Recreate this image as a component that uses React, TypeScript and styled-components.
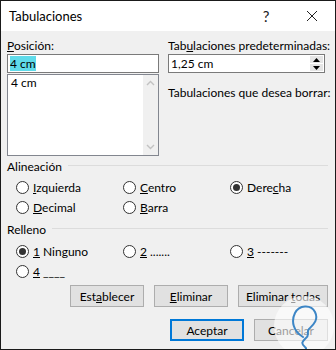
import styled, { createGlobalStyle } from 'styled-components';

const GlobalStyle = createGlobalStyle`
    html, body {
        margin: 0;
        padding: 0;
        background: #ffffff;
    }
    body {
        font-family: Lato, "Noto Sans", sans-serif;
        font-size: 12px;
        color: #000;
    }
`

const Dialog = styled.div`
    position: relative;
    width: 336px;
    height: 350px;
    box-sizing: border-box;
    border: 1px solid #1a1a1a;
    background: #f0f0f0;
    display: flex;
    flex-direction: column;
    overflow: hidden;
`

const TitleBar = styled.div`
    height: 30px;
    background: #fff;
    display: flex;
    align-items: center;
    padding-left: 8px;
    flex-shrink: 0;

    h1 {
        flex: 1;
        margin: 0;
        font-size: 13px;
        font-weight: normal;
    }
`

const TitleButton = styled.span`
    width: 46px;
    text-align: center;
    font-size: 15px;
    color: #222;
`

const Body = styled.div`
    padding: 0 7px 0 6px;
    display: flex;
    flex-direction: column;
`

const TopGrid = styled.div`
    display: grid;
    grid-template-columns: 152px 157px;
    column-gap: 9px;
    padding-top: 6px;
`

const Column = styled.div`
    display: flex;
    flex-direction: column;
`

const Label = styled.div<{ $top?: number }>`
    height: 17px;
    line-height: 17px;
    margin-top: ${p => p.$top ?? 0}px;
    white-space: nowrap;
`

const TextBox = styled.div`
    height: 19px;
    box-sizing: border-box;
    border: 1px solid #7a7a7a;
    background: #fff;
    display: flex;
    align-items: center;
    padding-left: 2px;
`

const Selected = styled.span`
    background: #5fdbea;
    line-height: 15px;
`

const ListBox = styled.div`
    height: 82px;
    box-sizing: border-box;
    border: 1px solid #82868f;
    background: #fff;
    display: flex;
    margin-top: 1px;
`

const ListItems = styled.div`
    flex: 1;
    padding: 0 3px;
    line-height: 16px;
`

const ScrollTrack = styled.div`
    width: 15px;
    background: #f0f0f0;
    display: flex;
    flex-direction: column;
    justify-content: space-between;
    align-items: center;
    padding: 5px 0;
`

const SpinBox = styled(TextBox)`
    padding-right: 1px;
    justify-content: space-between;
`

const SpinButtons = styled.div`
    width: 13px;
    height: 15px;
    display: flex;
    flex-direction: column;
    gap: 1px;
`

const SpinButton = styled.div`
    flex: 1;
    background: #e5e5e5;
    display: flex;
    align-items: center;
    justify-content: center;
`

const GroupHeader = styled.div<{ $top: number }>`
    display: flex;
    align-items: center;
    gap: 6px;
    margin-top: ${p => p.$top}px;
    height: 17px;
    line-height: 17px;

    &::after {
        content: "";
        flex: 1;
        height: 1px;
        margin-top: -2px;
        background: #dcdcdc;
    }
`

const RadioGrid = styled.div<{ $top: number }>`
    display: grid;
    grid-template-columns: 107px 107px 1fr;
    grid-auto-rows: 20px;
    padding-left: 9px;
    margin-top: ${p => p.$top}px;
`

const RadioItem = styled.div`
    display: flex;
    align-items: center;
    gap: 4px;
    white-space: nowrap;
`

const RadioCircle = styled.span<{ $checked?: boolean }>`
    width: 13px;
    height: 13px;
    box-sizing: border-box;
    border: 1px solid #333;
    border-radius: 50%;
    background: #fff;
    display: flex;
    align-items: center;
    justify-content: center;

    &::after {
        content: "";
        width: 7px;
        height: 7px;
        border-radius: 50%;
        background: ${p => (p.$checked ? '#333' : 'transparent')};
    }
`

const ButtonRow = styled.div<{ $top: number }>`
    display: flex;
    justify-content: flex-end;
    gap: 10px;
    margin-top: ${p => p.$top}px;
`

const Button = styled.button<{ $width?: number; $default?: boolean }>`
    width: ${p => p.$width ?? 74}px;
    height: 22px;
    box-sizing: border-box;
    border: ${p => (p.$default ? '2px solid #0078d7' : '1px solid #adadad')};
    background: #e1e1e1;
    font-family: inherit;
    font-size: 12px;
    color: #000;
    padding: 0;
`

const Watermark = styled.svg`
    position: absolute;
    right: -4px;
    bottom: -12px;
`

const U = styled.span`
    text-decoration: underline;
`

const ChevronUp = () => (
    <svg width="9" height="6" viewBox="0 0 9 6">
        <path d="M1 5 L4.5 1.5 L8 5" fill="none" stroke="#c2c2c2" strokeWidth="1.4" />
    </svg>
)

const ChevronDown = () => (
    <svg width="9" height="6" viewBox="0 0 9 6">
        <path d="M1 1 L4.5 4.5 L8 1" fill="none" stroke="#c2c2c2" strokeWidth="1.4" />
    </svg>
)

const Radio = ({ checked, children }: { checked?: boolean; children: React.ReactNode }) => (
    <RadioItem>
        <RadioCircle $checked={checked} />
        <span>{children}</span>
    </RadioItem>
)

const App = () => {
    return (
        <>
            <GlobalStyle />
            <Dialog>
                <TitleBar>
                    <h1>Tabulaciones</h1>
                    <TitleButton>?</TitleButton>
                    <TitleButton>
                        <svg width="12" height="12" viewBox="0 0 12 12">
                            <path d="M1 1 L11 11 M11 1 L1 11" stroke="#222" strokeWidth="1" />
                        </svg>
                    </TitleButton>
                </TitleBar>
                <Body>
                    <TopGrid>
                        <Column>
                            <Label><U>P</U>osición:</Label>
                            <TextBox><Selected>4 cm</Selected></TextBox>
                            <ListBox>
                                <ListItems>4 cm</ListItems>
                                <ScrollTrack>
                                    <ChevronUp />
                                    <ChevronDown />
                                </ScrollTrack>
                            </ListBox>
                        </Column>
                        <Column>
                            <Label>Tab<U>u</U>laciones predeterminadas:</Label>
                            <SpinBox>
                                <span>1,25 cm</span>
                                <SpinButtons>
                                    <SpinButton>
                                        <svg width="7" height="4" viewBox="0 0 7 4"><path d="M0 4 L3.5 0 L7 4Z" fill="#000" /></svg>
                                    </SpinButton>
                                    <SpinButton>
                                        <svg width="7" height="4" viewBox="0 0 7 4"><path d="M0 0 L3.5 4 L7 0Z" fill="#000" /></svg>
                                    </SpinButton>
                                </SpinButtons>
                            </SpinBox>
                            <Label $top={11}>Tabulaciones que desea borrar:</Label>
                        </Column>
                    </TopGrid>

                    <GroupHeader $top={2}>Alineación</GroupHeader>
                    <RadioGrid $top={2}>
                        <Radio><U>I</U>zquierda</Radio>
                        <Radio><U>C</U>entro</Radio>
                        <Radio checked>Dere<U>c</U>ha</Radio>
                        <Radio><U>D</U>ecimal</Radio>
                        <Radio><U>B</U>arra</Radio>
                    </RadioGrid>

                    <GroupHeader $top={4}>Relleno</GroupHeader>
                    <RadioGrid $top={3}>
                        <Radio checked><U>1</U> Ninguno</Radio>
                        <Radio><U>2</U> .......</Radio>
                        <Radio><U>3</U> -------</Radio>
                        <Radio><U>4</U> ____</Radio>
                    </RadioGrid>

                    <ButtonRow $top={4}>
                        <Button>Est<U>a</U>blecer</Button>
                        <Button><U>E</U>liminar</Button>
                        <Button $width={90}>Eliminar <U>t</U>odas</Button>
                    </ButtonRow>
                    <ButtonRow $top={12}>
                        <Button $default>Aceptar</Button>
                        <Button>Cancelar</Button>
                    </ButtonRow>
                </Body>
                <Watermark width="70" height="70" viewBox="0 0 70 70">
                    <circle cx="35" cy="35" r="30" fill="rgba(255,255,255,0.6)" />
                    <path
                        d="M34 46 C24 40 22 30 26 22 C30 14 42 13 46 21 C50 29 44 34 40 38 C37 41 41 44 37 47 C34 50 31 52 36 56 C39 58 35 60 31 59"
                        fill="none"
                        stroke="#3d86c6"
                        strokeWidth="2"
                        strokeLinecap="round"
                    />
                </Watermark>
            </Dialog>
        </>
    )
}

export default App
